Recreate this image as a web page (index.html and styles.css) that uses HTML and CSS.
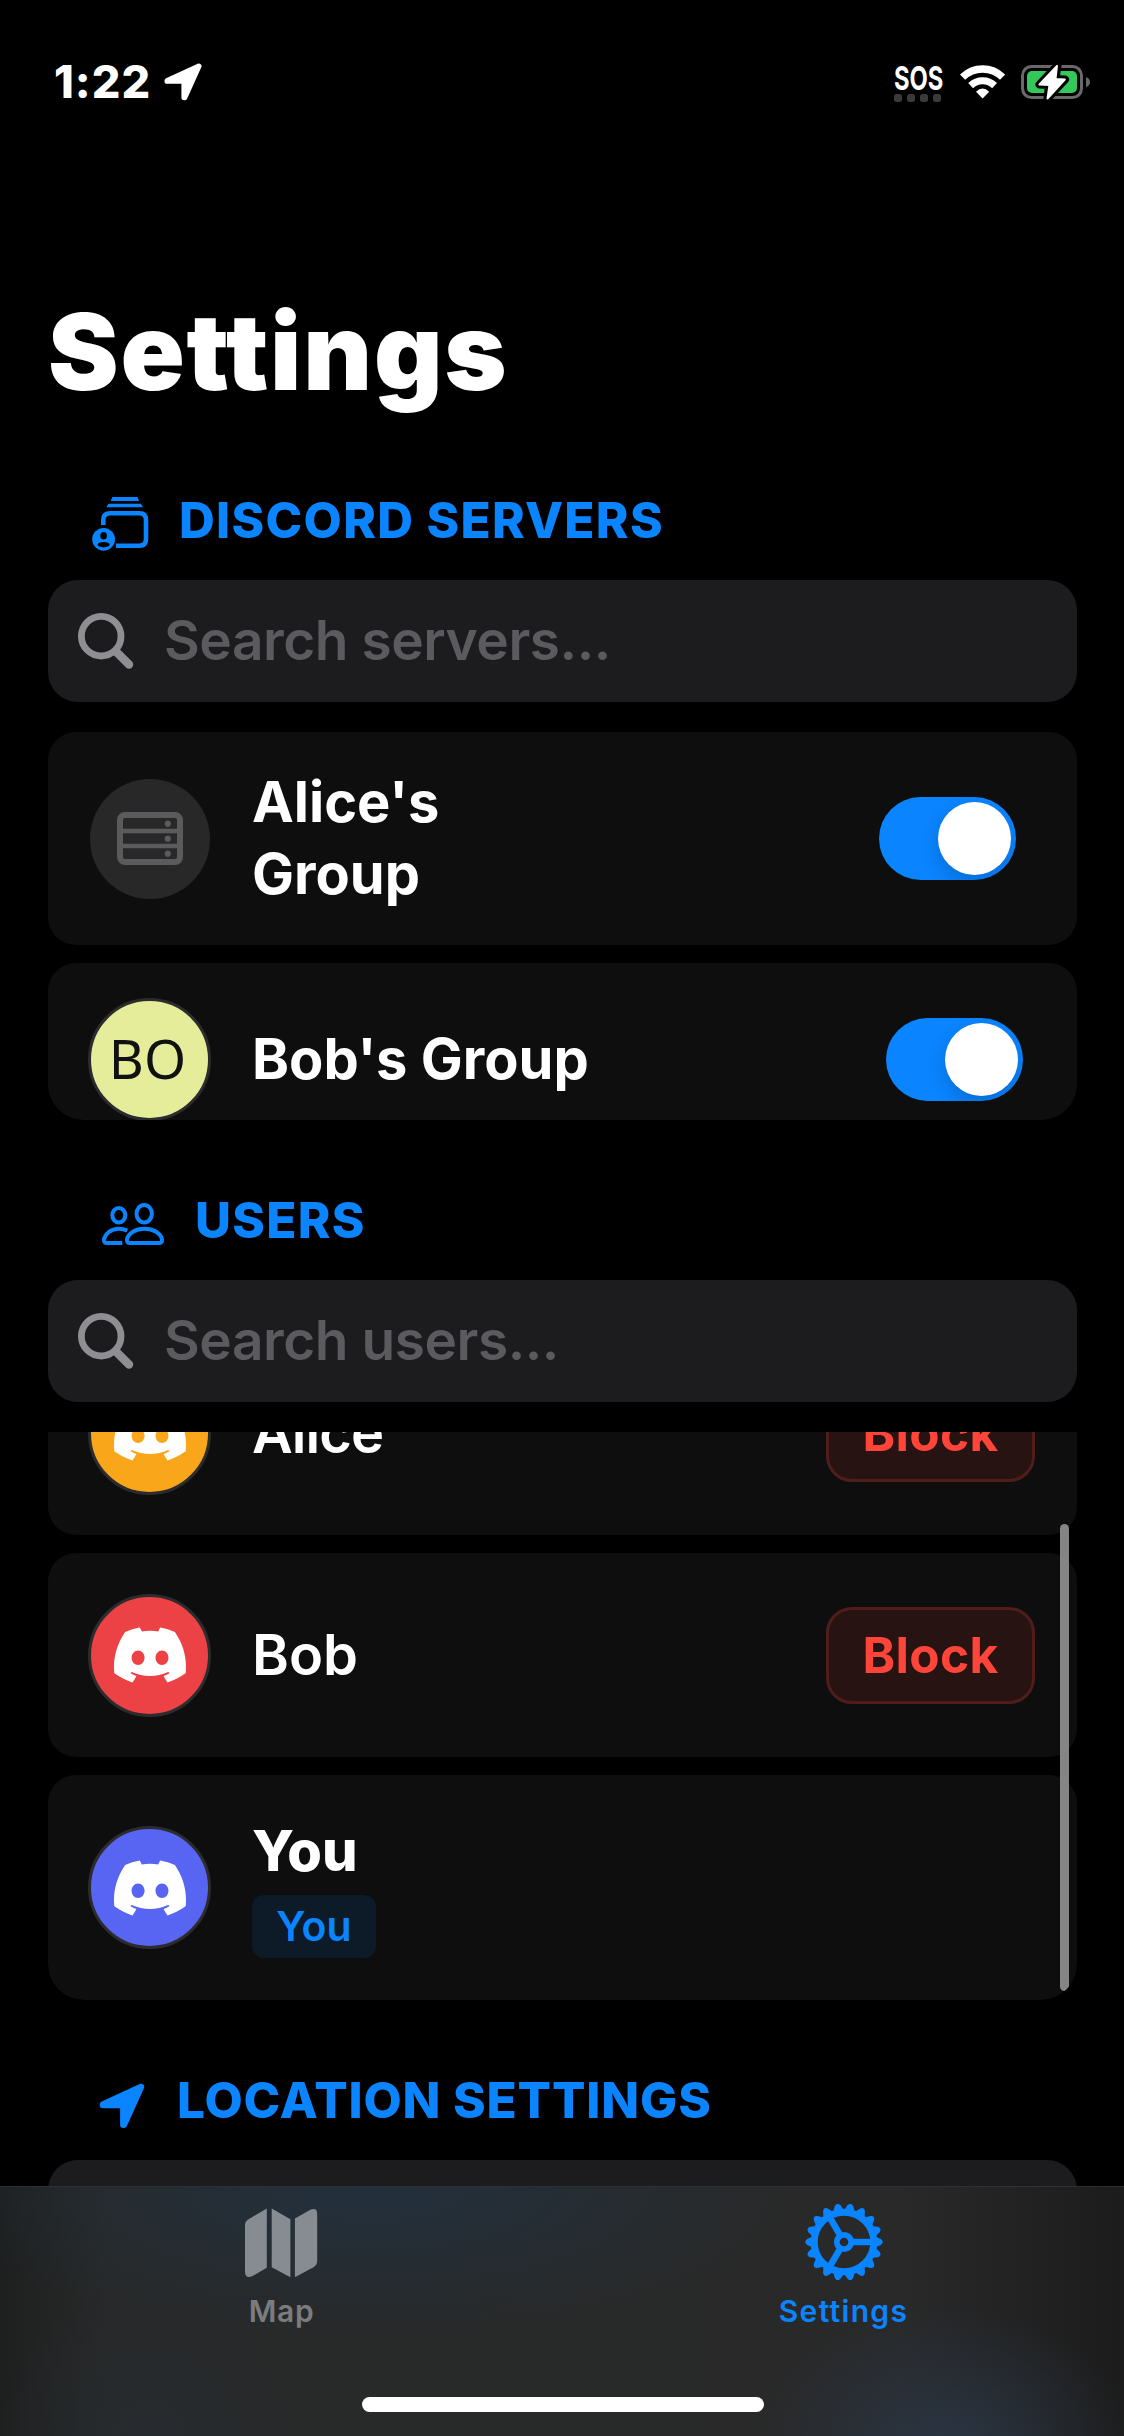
FILE: index.html
```html
<!DOCTYPE html>
<html lang="en">
<head>
<meta charset="utf-8">
<title>Settings</title>
<link rel="stylesheet" href="styles.css">
</head>
<body>
<svg class="defs" width="0" height="0" aria-hidden="true">
  <defs>
    <symbol id="discord" viewBox="0 0 24 24"><path d="M20.317 4.3698a19.7913 19.7913 0 00-4.8851-1.5152.0741.0741 0 00-.0785.0371c-.211.3753-.4447.8648-.6083 1.2495-1.8447-.2762-3.68-.2762-5.4868 0-.1636-.3933-.4058-.8742-.6177-1.2495a.077.077 0 00-.0785-.037 19.7363 19.7363 0 00-4.8852 1.515.0699.0699 0 00-.0321.0277C.5334 9.0458-.319 13.5799.0992 18.0578a.0824.0824 0 00.0312.0561c2.0528 1.5076 4.0413 2.4228 5.9929 3.0294a.0777.0777 0 00.0842-.0276c.4616-.6304.8731-1.2952 1.226-1.9942a.076.076 0 00-.0416-.1057c-.6528-.2476-1.2743-.5495-1.8722-.8923a.077.077 0 01-.0076-.1277c.1258-.0943.2517-.1923.3718-.2914a.0743.0743 0 01.0776-.0105c3.9278 1.7933 8.18 1.7933 12.0614 0a.0739.0739 0 01.0785.0095c.1202.099.246.1981.3728.2924a.077.077 0 01-.0066.1276 12.2986 12.2986 0 01-1.873.8914.0766.0766 0 00-.0407.1067c.3604.698.7719 1.3628 1.225 1.9932a.076.076 0 00.0842.0286c1.961-.6067 3.9495-1.5219 6.0023-3.0294a.077.077 0 00.0313-.0552c.5004-5.177-.8382-9.6739-3.5485-13.6604a.061.061 0 00-.0312-.0286zM8.02 15.3312c-1.1825 0-2.1569-1.0857-2.1569-2.419 0-1.3332.9555-2.4189 2.157-2.4189 1.2108 0 2.1757 1.0952 2.1568 2.419 0 1.3332-.9555 2.4189-2.1569 2.4189zm7.9748 0c-1.1825 0-2.1569-1.0857-2.1569-2.419 0-1.3332.9554-2.4189 2.1569-2.4189 1.2108 0 2.1757 1.0952 2.1568 2.419 0 1.3332-.946 2.4189-2.1568 2.4189Z"/></symbol>
    <symbol id="arrow" viewBox="0 0 48 48"><path d="M43 5 5 22.5v.5h20.3v19.7h.7z" stroke="currentColor" stroke-width="6.4" stroke-linejoin="round"/></symbol>
    <symbol id="search" viewBox="0 0 56 56"><g fill="none" stroke="currentColor" stroke-linecap="round"><circle cx="23.2" cy="23.2" r="19.8" stroke-width="6.8"/><path d="M38.5 39 51 51.5" stroke-width="8.4"/></g></symbol>
    <path id="tooth" d="M-5 -32.500 L-2.900 -36.800 Q0 -40.800 2.900 -36.800 L5 -32.500Z"/>
  </defs>
</svg>

<div class="screen">
  <header class="status">
    <span class="time">1:22</span>
    <svg class="status-arrow"><use href="#arrow"/></svg>
    <div class="sos"><span class="sos-text">SOS</span><span class="dots"><i></i><i></i><i></i><i></i></span></div>
    <svg class="wifi" viewBox="0 0 46 36"><path d="M2.6 13.2A28.5 28.5 0 0 1 42.6 13.2" fill="none" stroke="#fff" stroke-width="7.4"/><path d="M10.6 21.6A17.5 17.5 0 0 1 34.6 21.6" fill="none" stroke="#fff" stroke-width="7"/><path d="M22.6 34.4 16 27.8Q22.6 21 29.2 27.8Z" fill="#fff"/></svg>
    <svg class="battery" viewBox="0 0 70 36"><rect x="1.5" y="2.5" width="59" height="31" rx="9" fill="none" stroke="#69696b" stroke-width="3"/><path d="M65 13q4 1.500 4 5t-4 5z" fill="#69696b"/><rect x="6" y="7" width="50" height="22" rx="5" fill="#34c759"/><path d="M36.500 1.500 18.500 20.500 28 21 26.500 34.500 44 15.500 34.500 15Z" stroke="#000" stroke-width="8" stroke-linejoin="round"/><path d="M36 2 18.500 20.500 28.500 21 26.500 34.500 43.800 15.500 34.500 15Z" fill="#fff" stroke="#fff" stroke-width="2" stroke-linejoin="round"/></svg>
  </header>

  <main class="content">
    <h1>Settings</h1>

    <section>
      <h2 class="head head-servers">
        <svg width="60" height="60" viewBox="0 0 60 60"><path d="M22.500 7H47.500L49 11H20.700zM18.500 13.700H51L53 17.200H16.300z"/><path d="M13.300 35V30Q13.300 23.200 20 23.200H49.500Q56 23.200 56 30V49Q56 55.700 49.500 55.700H26" fill="none" stroke="currentColor" stroke-width="4.600"/><circle cx="13.600" cy="49.300" r="11.400"/><ellipse cx="13.600" cy="45.700" rx="3.300" ry="3.800" fill="#000"/><ellipse cx="13.600" cy="54.700" rx="6" ry="2.700" fill="#000"/></svg>
        <span>DISCORD SERVERS</span>
      </h2>
      <div class="search"><svg><use href="#search"/></svg><span>Search servers...</span></div>
      <div class="list servers">
        <div class="card card-a">
          <div class="avatar blank"><svg width="120" height="120" viewBox="0 0 120 120" fill="none" stroke="#5b5b5d"><rect x="30" y="36" width="60" height="47" rx="5" stroke-width="6"/><path d="M30 52H90M30 67H90" stroke-width="4.500"/><g fill="#5b5b5d" stroke="none"><circle cx="77.800" cy="44.700" r="3.100"/><circle cx="77.800" cy="59.700" r="3.100"/><circle cx="77.800" cy="74.700" r="3.100"/></g></svg></div>
          <span class="name semi">Alice's Group</span>
          <div class="toggle"><i></i></div>
        </div>
        <div class="card card-b">
          <div class="avatar lime"><span>BO</span></div>
          <span class="name semi">Bob's Group</span>
          <div class="toggle"><i></i></div>
        </div>
      </div>
    </section>

    <section>
      <h2 class="head head-users">
        <svg width="66" height="60" viewBox="0 0 66 60" fill="none" stroke="currentColor" stroke-width="4"><ellipse cx="18.800" cy="25.200" rx="6.500" ry="7.200"/><ellipse cx="44.200" cy="23.700" rx="7.700" ry="8.800"/><path d="M30 53H59Q62.300 53 62 49.500C61 43 53 38.700 44.500 38.700 36 38.700 28 43 27 49.500Q26.700 53 30 53ZM27.300 40.600C24 39 21 38.700 18.800 38.700 11 38.700 5 44 4 49.500Q3.700 53 7 53H22.300"/></svg>
        <span>USERS</span>
      </h2>
      <div class="search"><svg><use href="#search"/></svg><span>Search users...</span></div>
      <div class="list users">
        <div class="card user">
          <div class="avatar orange"><svg><use href="#discord"/></svg></div>
          <span class="name tight">Alice</span>
          <button class="block">Block</button>
        </div>
        <div class="card user">
          <div class="avatar red"><svg><use href="#discord"/></svg></div>
          <span class="name">Bob</span>
          <button class="block">Block</button>
        </div>
        <div class="card you">
          <div class="avatar blurple"><svg><use href="#discord"/></svg></div>
          <div class="me"><span class="name bold">You</span><span class="badge">You</span></div>
        </div>
        <div class="scrollbar"></div>
      </div>
    </section>

    <section>
      <h2 class="head head-location">
        <svg width="48" height="48"><use href="#arrow"/></svg>
        <span>LOCATION SETTINGS</span>
      </h2>
      <div class="panel"></div>
    </section>
  </main>

  <footer class="tabbar">
    <nav class="tabs">
      <a class="tab">
        <svg width="80" height="80" viewBox="0 0 80 80"><path d="M25.800 6.500V65.700L12 73.800Q4 77.500 4 69.500V23.500Q4 19.300 7.500 17.200ZM30.700 6.500 49.400 17.300V75.200L30.700 65.200ZM53.900 16.500 68.500 8.300Q76.200 4.500 76.200 12.500V58.500Q76.200 63 72.500 65.300L53.900 75.200Z"/></svg>
        <span class="lb-map">Map</span>
      </a>
      <a class="tab active">
        <svg width="80" height="80" viewBox="-40 -40 80 80"><circle r="29.800" fill="none" stroke="currentColor" stroke-width="7"/><circle r="7.200" fill="none" stroke="currentColor" stroke-width="5.800"/><path d="M9 0H28M-4.500 -7.800-14 -24.200M-4.500 7.800-14 24.200" stroke="currentColor" stroke-width="6.600"/>
          <use href="#tooth" transform="rotate(10)"/><use href="#tooth" transform="rotate(30)"/><use href="#tooth" transform="rotate(50)"/><use href="#tooth" transform="rotate(70)"/><use href="#tooth" transform="rotate(90)"/><use href="#tooth" transform="rotate(110)"/><use href="#tooth" transform="rotate(130)"/><use href="#tooth" transform="rotate(150)"/><use href="#tooth" transform="rotate(170)"/><use href="#tooth" transform="rotate(190)"/><use href="#tooth" transform="rotate(210)"/><use href="#tooth" transform="rotate(230)"/><use href="#tooth" transform="rotate(250)"/><use href="#tooth" transform="rotate(270)"/><use href="#tooth" transform="rotate(290)"/><use href="#tooth" transform="rotate(310)"/><use href="#tooth" transform="rotate(330)"/><use href="#tooth" transform="rotate(350)"/></svg>
        <span class="lb-settings">Settings</span>
      </a>
    </nav>
    <div class="home"></div>
  </footer>
</div>
</body>
</html>
```

FILE: styles.css
```css
* { box-sizing: border-box; }
body { margin: 0; background: #000; color: #fff; font-family: Inter, "Liberation Sans", sans-serif; }
svg { display: block; flex: none; overflow: visible; }
svg:not([fill]) { fill: currentColor; }
.defs { position: absolute; }
.screen { display: flex; flex-direction: column; width: 1124px; height: 2436px; overflow: hidden; background: #000; }

.status { display: flex; align-items: center; height: 164px; flex: none; padding: 0 33px 0 54px; }
.time { font-size: 45px; font-weight: 800; line-height: 60px; width: 109px; letter-spacing: 1px; white-space: nowrap; }
.status-arrow { width: 40px; height: 40px; }
.sos { width: 48px; height: 37px; margin: 2px 18px 0 auto; display: flex; flex-direction: column; justify-content: space-between; }
.sos-text { font-size: 33px; font-weight: 700; line-height: 27px; transform: scaleX(.72); transform-origin: 0 50%; white-space: nowrap; }
.dots { display: flex; gap: 5px; }
.dots i { width: 8px; height: 8px; border-radius: 2.500px; background: #3a3a3b; }
.wifi { width: 46px; height: 36px; margin-right: 15px; }
.battery { width: 70px; height: 36px; }

.content { flex: 1; min-height: 0; overflow: hidden; padding: 0 47px 0 48px; }
h1 { margin: 128px 0 0; font-size: 106px; font-weight: 900; line-height: 120px; letter-spacing: 1.800px; white-space: nowrap; }
section { padding-top: 70px; }
h1 + section { padding-top: 78px; }
.head { display: flex; align-items: center; height: 60px; margin: 0 0 30px; color: #0a84ff; font-size: 49.500px; font-weight: 800; letter-spacing: 1.300px; white-space: nowrap; }
.head-servers { padding-left: 42px; gap: 29px; }
.head-users { padding-left: 52px; gap: 29px; }
.head-location { padding-left: 50px; gap: 31px; letter-spacing: .85px; }
.head-location svg { margin-top: 12px; }

.search { display: flex; align-items: center; gap: 30px; height: 122px; padding-left: 30px; border-radius: 30px; background: #1c1c1e; color: #5a5a5f; font-size: 55px; font-weight: 560; letter-spacing: -.45px; white-space: nowrap; }
.search svg { width: 56px; height: 56px; color: #8e8e93; }
.search span { padding-bottom: 2px; }

.list { display: flex; flex-direction: column; gap: 18px; margin-top: 30px; overflow: hidden; }
.servers { height: 388px; border-radius: 0 0 36px 36px; }
.users { position: relative; height: 568px; justify-content: flex-end; border-radius: 0 0 36px 36px; }
.card { display: flex; align-items: center; flex: none; padding: 0 42px; border-radius: 28px; background: #0e0e0e; }
.card-a { height: 213px; padding-right: 61px; }
.card-b { height: 192px; padding-right: 54px; }
.user { height: 204px; }
.you { height: 225px; border-radius: 28px 28px 36px 36px; }

.avatar { display: grid; place-items: center; flex: none; width: 123px; height: 123px; margin: 0 41px 0 -2px; border: 3px solid #2c2c2e; border-radius: 50%; color: #fff; }
.avatar > svg { width: 72px; height: 72px; }
.blank { width: 120px; height: 120px; margin: 0 42px 0 0; border: 0; background: #282828; }
.blank > svg { width: 120px; height: 120px; }
.lime { padding: 0 4px 2px 0; background: #e5ed9b; color: #111; font: 400 54px/60px "Noto Sans", sans-serif; }
.orange { background: #faa61a; }
.red { background: #ed4245; }
.blurple { background: #5865f2; }

.name { font-size: 56px; font-weight: 560; line-height: 72px; }
.semi { font-weight: 700; }
.bold { font-weight: 800; }
.tight { letter-spacing: -.9px; }
.card-a .name { width: 250px; padding-bottom: 2px; }
.toggle { display: flex; justify-content: flex-end; align-items: center; width: 137px; height: 83px; margin-left: auto; padding: 5px; border-radius: 42px; background: #0a84ff; overflow: hidden; }
.toggle i { width: 73px; height: 73px; border-radius: 50%; background: #fff; box-shadow: 0 8px 18px rgba(0,0,0,.17); }
.block { width: 209px; height: 97px; margin-left: auto; padding: 0; border: 3px solid #511d1b; border-radius: 26px; background: #261312; color: #ff453a; font: 680 49.500px/60px Inter, sans-serif; letter-spacing: .3px; }
.me { display: flex; flex-direction: column; align-items: flex-start; padding-bottom: 2px; }
.me .name { line-height: 72px; margin-bottom: 8px; }
.badge { width: 124px; height: 63px; border-radius: 12px; background: #0d1a28; color: #0a84ff; font-size: 41px; font-weight: 560; line-height: 62px; text-align: center; }
.scrollbar { position: absolute; top: 92px; right: 8px; width: 9px; height: 467px; border-radius: 4.500px; background: rgba(142,142,142,.93); }
.panel { height: 300px; border-radius: 30px; background: #1c1c1e; }

.tabbar { flex: none; display: flex; flex-direction: column; height: 250px; border-top: 1px solid #2f3032;
  background:
    radial-gradient(ellipse 430px 150px at 370px 0, rgba(33,50,66,.8), rgba(33,50,66,0)),
    radial-gradient(ellipse 190px 140px at 945px 260px, rgba(42,54,70,.9), rgba(42,54,70,0)),
    radial-gradient(ellipse 150px 150px at 150px 250px, rgba(37,44,51,.6), rgba(37,44,51,0)),
    linear-gradient(90deg, #1e2020, #282929 110px, #292929 900px, #1c1c1c); }
.tabs { display: flex; }
.tab { flex: 1; display: flex; flex-direction: column; align-items: center; padding-top: 15px; color: #7b7c7e; font-size: 30px; font-weight: 600; line-height: 36px; gap: 11px; }
.tab svg { color: #868c92; }
.tab.active { padding-left: 2px; }
.active, .active svg { color: #0a84ff; }
.lb-map { letter-spacing: .6px; padding-left: 2px; }
.lb-settings { font-weight: 640; letter-spacing: 1.300px; }
.home { width: 402px; height: 15px; margin: auto auto 24px 362px; border-radius: 8px; background: #fff; }
```
